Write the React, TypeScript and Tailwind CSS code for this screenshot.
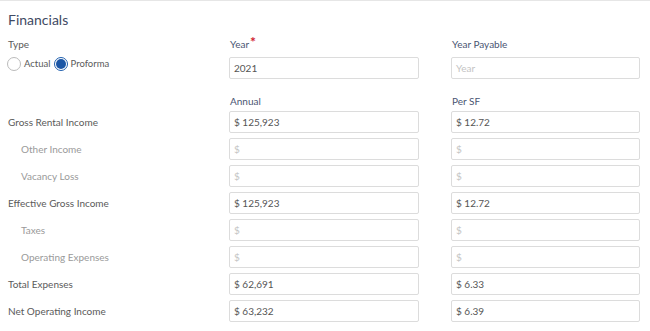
import React from "react";

const rows: { label: string; sub?: boolean; a: string; b: string }[] = [
  { label: "Gross Rental Income", a: "125,923", b: "12.72" },
  { label: "Other Income", sub: true, a: "", b: "" },
  { label: "Vacancy Loss", sub: true, a: "", b: "" },
  { label: "Effective Gross Income", a: "125,923", b: "12.72" },
  { label: "Taxes", sub: true, a: "", b: "" },
  { label: "Operating Expenses", sub: true, a: "", b: "" },
  { label: "Total Expenses", a: "62,691", b: "6.33" },
  { label: "Net Operating Income", a: "63,232", b: "6.39" },
];

function Box({ value, placeholder }: { value?: string; placeholder?: string }) {
  return (
    <div className="h-[22px] border border-[#dcdcdc] rounded-[2px] flex items-center px-[4px] text-[10px] bg-white">
      {value ? (
        <span className="text-[#555]">{value}</span>
      ) : (
        <span className="text-[#c4c4c4]">{placeholder}</span>
      )}
    </div>
  );
}

export default function App() {
  return (
    <div className="w-[650px] h-[331px] bg-white border-t border-[#e6e6e6] overflow-hidden" style={{ fontFamily: "Lato, 'Open Sans', sans-serif" }}>
      <div className="pl-[8px]">
        <div className="text-[14px] text-[#3f4a63] pt-[10px] leading-[18px]">Financials</div>
        <div className="grid grid-cols-[221px_190px_221px] mt-[9px]">
          <div>
            <div className="text-[10px] text-[#5a5a5a] leading-[12px]">Type</div>
            <div className="flex items-center mt-[7px] text-[9.5px] text-[#5a5a5a]">
              <span className="w-[14px] h-[14px] rounded-full border border-[#bbb] -ml-[1px]"></span>
              <span className="ml-[3px]">Actual</span>
              <span className="ml-[3px] w-[14px] h-[14px] rounded-full border border-[#1f5fae] flex items-center justify-center">
                <span className="w-[10px] h-[10px] rounded-full bg-[#1a56a6]"></span>
              </span>
              <span className="ml-[3px]">Proforma</span>
            </div>
          </div>
          <div>
            <div className="text-[10px] text-[#4a5572] leading-[12px] pl-[1px] flex items-start">
              Year<span className="text-[#d0202f] text-[14px] font-bold leading-[10px] ml-[1px] -mt-[1px]">*</span>
            </div>
            <div className="mt-[7px]">
              <Box value="2021" />
            </div>
          </div>
          <div className="pl-[32px]">
            <div className="text-[10px] text-[#4a5572] leading-[12px] pl-[1px]">Year Payable</div>
            <div className="mt-[7px]">
              <Box placeholder="Year" />
            </div>
          </div>
        </div>
        <div className="grid grid-cols-[221px_190px_221px] mt-[16px]">
          <div></div>
          <div className="text-[10px] text-[#4a5572] leading-[12px] pl-[1px]">Annual</div>
          <div className="text-[10px] text-[#4a5572] leading-[12px] pl-[33px]">Per SF</div>
        </div>
        <div className="grid grid-cols-[221px_190px_221px] gap-y-[5px] mt-[4px]">
          {rows.map((r) => (
            <React.Fragment key={r.label}>
              <div
                className={
                  "flex items-center text-[10px] " +
                  (r.sub ? "pl-[13px] text-[#9a9a9a]" : "text-[#5a5a5a]")
                }
              >
                {r.label}
              </div>
              <Box value={r.a ? "$ " + r.a : ""} placeholder="$" />
              <div className="pl-[32px]">
                <Box value={r.b ? "$ " + r.b : ""} placeholder="$" />
              </div>
            </React.Fragment>
          ))}
        </div>
      </div>
    </div>
  );
}
